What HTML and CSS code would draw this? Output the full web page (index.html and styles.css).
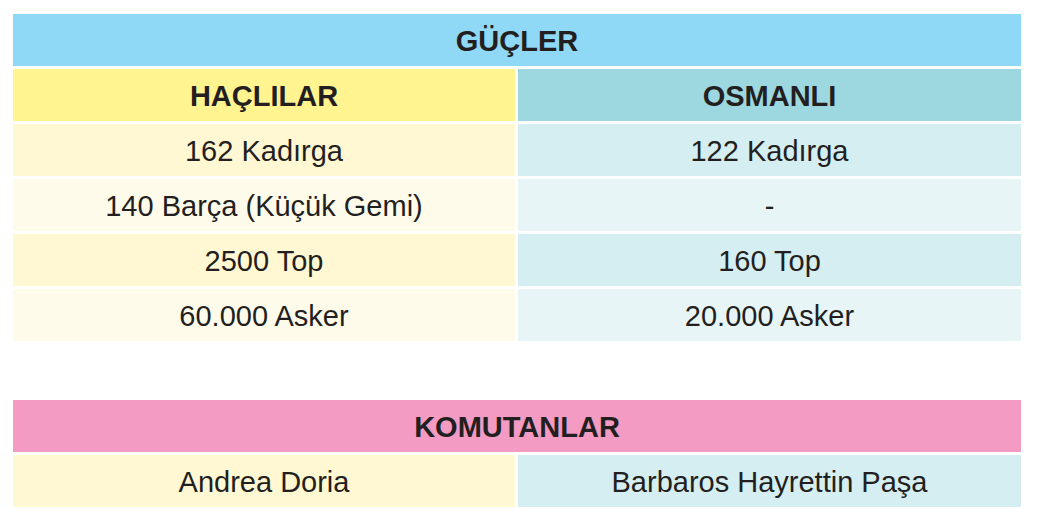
FILE: index.html
```html
<!DOCTYPE html>
<html lang="tr">
<head>
<meta charset="utf-8">
<title>Güçler</title>
<link rel="stylesheet" href="styles.css">
</head>
<body>
<main class="page">
  <section class="table">
    <div class="cell title title-blue">GÜÇLER</div>
    <div class="cell head head-left">HAÇLILAR</div>
    <div class="cell head head-right">OSMANLI</div>
    <div class="cell left-a">162 Kadırga</div>
    <div class="cell right-a">122 Kadırga</div>
    <div class="cell left-b">140 Barça (Küçük Gemi)</div>
    <div class="cell right-b">-</div>
    <div class="cell left-a">2500 Top</div>
    <div class="cell right-a">160 Top</div>
    <div class="cell left-b">60.000 Asker</div>
    <div class="cell right-b">20.000 Asker</div>
  </section>
  <section class="table second">
    <div class="cell title title-pink">KOMUTANLAR</div>
    <div class="cell left-a">Andrea Doria</div>
    <div class="cell right-a">Barbaros Hayrettin Paşa</div>
  </section>
</main>
</body>
</html>
```
FILE: styles.css
```css
html, body {
  margin: 0;
  padding: 0;
  background: #ffffff;
}
body {
  font-family: "Liberation Sans", Arial, sans-serif;
  color: #231f20;
}
.page {
  padding: 14px 0 0 13px;
}
.table {
  display: grid;
  grid-template-columns: 502px 503px;
  grid-auto-rows: 52px;
  column-gap: 3px;
  row-gap: 3px;
  width: 1008px;
}
.table.second {
  margin-top: 59px;
}
.cell {
  display: flex;
  align-items: center;
  justify-content: center;
  font-size: 29px;
  line-height: 1;
  padding-top: 2px;
  box-sizing: border-box;
}
.title {
  grid-column: 1 / 3;
  font-weight: bold;
}
.head {
  font-weight: bold;
}
.title-blue { background: #8fd8f6; }
.title-pink { background: #f39bc2; }
.head-left { background: #fff490; }
.head-right { background: #9dd8e0; }
.left-a { background: #fff8d2; }
.left-b { background: #fffbeb; }
.right-a { background: #d5eef2; }
.right-b { background: #e7f5f7; }
```
